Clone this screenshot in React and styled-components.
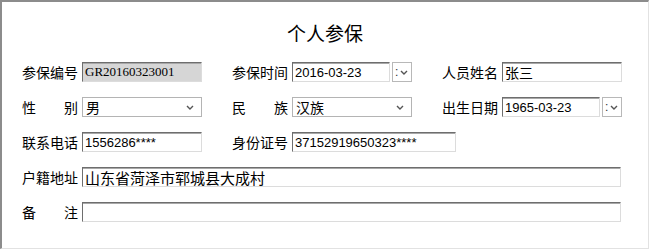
import styled, { createGlobalStyle } from "styled-components";

const GlobalStyle = createGlobalStyle`
    body {
        margin: 0;
        background: #ffffff;
        font-family: "Noto Sans CJK SC", "Liberation Sans", sans-serif;
    }
`;

const CJK = `"Noto Sans CJK SC", "Liberation Sans", sans-serif`;

function Chevron() {
    return (
        <svg width="8" height="5" viewBox="0 0 8 5">
            <path d="M1 1 L4 4 L7 1" fill="none" stroke="#555" strokeWidth="1.4" />
        </svg>
    );
}

export default function App() {
    return (
        <>
            <GlobalStyle />
            <Panel>
                <Title>个人参保</Title>
                <Rows>
                    <Row>
                        <Group>
                            <Label>参保编号</Label>
                            <TextBox $disabled $serif>GR20160323001</TextBox>
                        </Group>
                        <Group>
                            <Label>参保时间</Label>
                            <DatePicker value="2016-03-23" />
                        </Group>
                        <Group>
                            <Label>人员姓名</Label>
                            <TextBox $cjk>张三</TextBox>
                        </Group>
                    </Row>
                    <Row>
                        <Group>
                            <SpacedLabel><span>性</span><span>别</span></SpacedLabel>
                            <Select>男</Select>
                        </Group>
                        <Group>
                            <SpacedLabel><span>民</span><span>族</span></SpacedLabel>
                            <Select>汉族</Select>
                        </Group>
                        <Group>
                            <Label>出生日期</Label>
                            <DatePicker value="1965-03-23" />
                        </Group>
                    </Row>
                    <Row>
                        <Group>
                            <Label>联系电话</Label>
                            <TextBox>1556286****</TextBox>
                        </Group>
                        <Group>
                            <Label>身份证号</Label>
                            <TextBox $width={164}>37152919650323****</TextBox>
                        </Group>
                    </Row>
                    <Row>
                        <Group>
                            <Label>户籍地址</Label>
                            <TextBox $cjk $large $width={539}>山东省菏泽市郓城县大成村</TextBox>
                        </Group>
                    </Row>
                    <Row>
                        <Group>
                            <SpacedLabel><span>备</span><span>注</span></SpacedLabel>
                            <TextBox $width={539} />
                        </Group>
                    </Row>
                </Rows>
            </Panel>
        </>
    );
}

function Select({ children }) {
    return (
        <SelectBox>
            <span>{children}</span>
            <Chevron />
        </SelectBox>
    );
}

function DatePicker({ value }) {
    return (
        <DateWrap>
            <TextBox $width={98}>{value}</TextBox>
            <DateButton>
                <span>:</span>
                <Chevron />
            </DateButton>
        </DateWrap>
    );
}

const Panel = styled.div`
    width: 649px;
    height: 249px;
    box-sizing: border-box;
    border-top: 2px solid #8c8c8c;
    border-left: 2px solid #8c8c8c;
    border-right: 1px solid #e2e2e2;
    border-bottom: 1px solid #e2e2e2;
    background: #ffffff;
`;

const Title = styled.div`
    height: 60px;
    display: flex;
    align-items: center;
    justify-content: center;
    font-family: ${CJK};
    font-size: 19px;
    color: #000;
`;

const Rows = styled.div`
    display: flex;
    flex-direction: column;
    gap: 15px;
    padding-left: 20px;
`;

const Row = styled.div`
    display: flex;
    align-items: center;
    gap: 30px;
    height: 20px;
`;

const Group = styled.div`
    display: flex;
    align-items: center;
    gap: 4px;
`;

const Label = styled.div`
    width: 56px;
    font-family: ${CJK};
    font-size: 14px;
    line-height: 20px;
    color: #000;
    white-space: nowrap;
`;

const SpacedLabel = styled(Label)`
    display: flex;
    justify-content: space-between;
`;

const TextBox = styled.div`
    width: ${(p) => p.$width || 120}px;
    height: 20px;
    box-sizing: border-box;
    border-style: solid;
    border-width: 1px;
    border-color: #6e6e6e #dcdcdc #dcdcdc #6e6e6e;
    box-shadow: inset 0 1px 0 #a8a8a8;
    background: ${(p) => (p.$disabled ? "#d6d6d6" : "#ffffff")};
    padding: 0 2px;
    display: flex;
    align-items: center;
    font-family: ${(p) =>
        p.$serif ? `"Liberation Serif", serif` : p.$cjk ? CJK : `"Liberation Sans", sans-serif`};
    font-size: ${(p) => (p.$large ? 15 : p.$cjk ? 14 : 13)}px;
    color: #000;
    white-space: nowrap;
    overflow: hidden;
`;

const SelectBox = styled.div`
    width: 120px;
    height: 20px;
    box-sizing: border-box;
    border: 1px solid #b4b4b4;
    background: #ffffff;
    display: flex;
    align-items: center;
    justify-content: space-between;
    padding: 0 7px 0 3px;
    font-family: ${CJK};
    font-size: 14px;
    color: #000;
`;

const DateWrap = styled.div`
    display: flex;
    align-items: center;
    gap: 2px;
`;

const DateButton = styled.div`
    width: 20px;
    height: 20px;
    box-sizing: border-box;
    border: 1px solid #b8b8b8;
    display: flex;
    align-items: center;
    justify-content: space-between;
    padding: 0 3px 0 2px;
    font-family: "Liberation Sans", sans-serif;
    font-size: 12px;
    color: #333;
`;
